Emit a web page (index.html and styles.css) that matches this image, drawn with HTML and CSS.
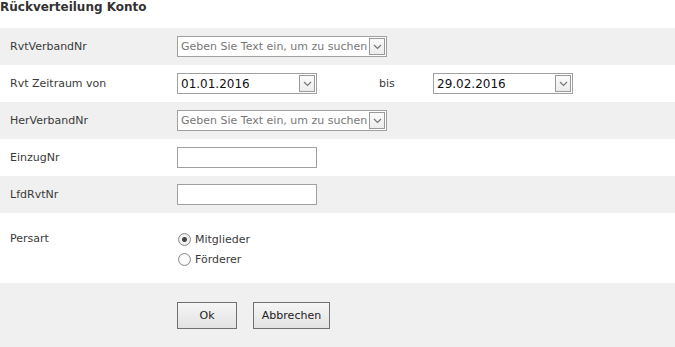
FILE: index.html
```html
<!DOCTYPE html>
<html lang="de">

<head>
    <meta charset="UTF-8">
    <meta name="viewport" content="width=device-width, initial-scale=1.0">
    <title>Rückverteilung Konto</title>
    <link rel="stylesheet" href="styles.css">
</head>

<body>
    <h1 class="title">Rückverteilung Konto</h1>
    <div class="form">
        <div class="row gray">
            <label class="lbl">RvtVerbandNr</label>
            <div class="combo wide">
                <span class="placeholder">Geben Sie Text ein, um zu suchen</span>
                <span class="drop"><svg width="9" height="6" viewBox="0 0 9 6"><path d="M1 1l3.5 3.5L8 1" fill="none" stroke="#777" stroke-width="1.2"/></svg></span>
            </div>
        </div>
        <div class="row">
            <label class="lbl">Rvt Zeitraum von</label>
            <div class="combo date">
                <span class="value">01.01.2016</span>
                <span class="drop"><svg width="9" height="6" viewBox="0 0 9 6"><path d="M1 1l3.5 3.5L8 1" fill="none" stroke="#777" stroke-width="1.2"/></svg></span>
            </div>
            <span class="bis">bis</span>
            <div class="combo date">
                <span class="value">29.02.2016</span>
                <span class="drop"><svg width="9" height="6" viewBox="0 0 9 6"><path d="M1 1l3.5 3.5L8 1" fill="none" stroke="#777" stroke-width="1.2"/></svg></span>
            </div>
        </div>
        <div class="row gray">
            <label class="lbl">HerVerbandNr</label>
            <div class="combo wide">
                <span class="placeholder">Geben Sie Text ein, um zu suchen</span>
                <span class="drop"><svg width="9" height="6" viewBox="0 0 9 6"><path d="M1 1l3.5 3.5L8 1" fill="none" stroke="#777" stroke-width="1.2"/></svg></span>
            </div>
        </div>
        <div class="row">
            <label class="lbl">EinzugNr</label>
            <input class="text" type="text">
        </div>
        <div class="row gray">
            <label class="lbl">LfdRvtNr</label>
            <input class="text" type="text">
        </div>
        <div class="row tall">
            <label class="lbl">Persart</label>
            <div class="radios">
                <label class="radio"><input type="radio" name="persart" checked> Mitglieder</label>
                <label class="radio"><input type="radio" name="persart"> Förderer</label>
            </div>
        </div>
        <div class="row gray buttons">
            <button class="btn ok">Ok</button>
            <button class="btn">Abbrechen</button>
        </div>
    </div>
</body>

</html>
```

FILE: styles.css
```css
* {
    margin: 0;
    padding: 0;
    box-sizing: border-box;
}

body {
    font-family: "DejaVu Sans", Verdana, sans-serif;
    font-size: 11px;
    color: #333;
    background-color: #fff;
}

.title {
    font-size: 12px;
    font-weight: bold;
    color: #333;
    height: 28px;
    line-height: 14px;
}

.row {
    display: flex;
    align-items: center;
    height: 37px;
    padding-left: 10px;
}

.gray {
    background-color: #f0f0f0;
}

.lbl {
    width: 167px;
    color: #3a3a3a;
}

.combo {
    display: flex;
    align-items: center;
    justify-content: space-between;
    height: 21px;
    border: 1px solid #a0a0a0;
    background-color: #fff;
    padding: 0 1px 0 3px;
}

.wide {
    width: 210px;
}

.date {
    width: 140px;
}

.placeholder {
    color: #777;
    white-space: nowrap;
}

.value {
    color: #111;
    font-size: 12px;
}

.drop {
    display: flex;
    align-items: center;
    justify-content: center;
    width: 16px;
    height: 17px;
    border: 1px solid #999;
    background: linear-gradient(#fbfbfb, #ececec);
}

.bis {
    width: 54px;
    margin-left: 62px;
    color: #3a3a3a;
}

.text {
    width: 140px;
    height: 21px;
    border: 1px solid #a0a0a0;
    background-color: #fff;
    font: inherit;
}

.tall {
    height: 70px;
    align-items: flex-start;
}

.tall .lbl {
    padding-top: 19px;
}

.radios {
    display: flex;
    flex-direction: column;
    gap: 7px;
    padding-top: 20px;
}

.radio {
    display: flex;
    align-items: center;
    gap: 4px;
    color: #3a3a3a;
}

.radio input {
    appearance: none;
    width: 13px;
    height: 13px;
    border: 1px solid #8a8a8a;
    border-radius: 50%;
    background: radial-gradient(circle, #fff 40%, #e4e4e4 100%);
    margin-left: 1px;
}

.radio input:checked {
    background: radial-gradient(circle, #444 0, #444 2px, #f4f4f4 3px, #e4e4e4 100%);
}

.buttons {
    height: 64px;
    padding-left: 177px;
    align-items: flex-start;
    padding-top: 19px;
    gap: 16px;
}

.btn {
    height: 27px;
    font: inherit;
    color: #222;
    border: 1px solid #707070;
    background: linear-gradient(#f6f6f6, #e2e2e2);
}

.ok {
    width: 60px;
}

.btn:not(.ok) {
    width: 77px;
}
```
